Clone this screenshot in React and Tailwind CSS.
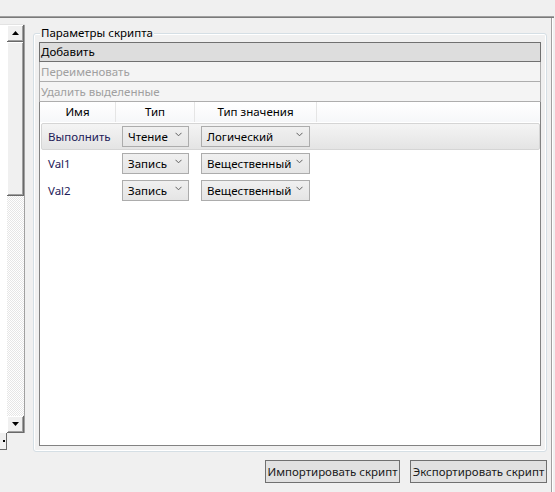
import React from 'react'

function Chevron() {
  return (
    <svg width="7" height="5" viewBox="0 0 7 5" className="shrink-0">
      <polyline points="0.5,0.8 3.5,3.8 6.5,0.8" fill="none" stroke="#606060" strokeWidth="1" />
    </svg>
  )
}

function Combo({ value, width }) {
  return (
    <div
      className={`h-[21px] ${width} flex items-center justify-between pl-[5px] pr-[6px] border border-[#acacac] bg-gradient-to-b from-[#f0f0f0] to-[#e5e5e5] text-black`}
    >
      <span className="leading-[15px] -mt-[1px] whitespace-nowrap">{value}</span>
      <span className="-mt-[5px]">
        <Chevron />
      </span>
    </div>
  )
}

function Row({ name, type, valueType, selected }) {
  return (
    <div
      className={`h-[27px] ml-[1px] flex items-center border rounded-[2px] ${
        selected
          ? 'border-[#d5d5d5] bg-gradient-to-b from-[#f4f4f4] to-[#e4e4e4]'
          : 'border-transparent'
      }`}
    >
      <div className="w-[75px] pl-[6px] text-[#1e2058]">{name}</div>
      <div className="w-[79px] pl-[5px]">
        <Combo value={type} width="w-[67px]" />
      </div>
      <div className="w-[122px] pl-[5px]">
        <Combo value={valueType} width="w-[109px]" />
      </div>
    </div>
  )
}

function ScrollButton({ up }) {
  return (
    <div className="h-[17px] shrink-0 flex items-center justify-center bg-[#f0f0f0] border-r border-b border-[#696969] shadow-[inset_1px_1px_0_#ffffff,inset_-1px_-1px_0_#a0a0a0]">
      <svg width="7" height="4" viewBox="0 0 7 4">
        {up ? <polygon points="0,4 7,4 3.5,0" fill="#000" /> : <polygon points="0,0 7,0 3.5,4" fill="#000" />}
      </svg>
    </div>
  )
}

export default function App() {
  const rows = [
    { name: 'Выполнить', type: 'Чтение', valueType: 'Логический', selected: true },
    { name: 'Val1', type: 'Запись', valueType: 'Вещественный' },
    { name: 'Val2', type: 'Запись', valueType: 'Вещественный' },
  ]

  return (
    <div className="w-[555px] h-[492px] bg-[#f0f0f0] overflow-hidden flex flex-col font-['Noto_Sans',sans-serif] text-[11.5px] text-black">
      <div className="h-[16px] shrink-0" />
      <div className="h-[2px] w-[554px] shrink-0 border-t border-[#a0a0a0] bg-[#7a7a7a]" />

      <div className="flex flex-1 min-h-0">
        {/* left list with scrollbar */}
        <div className="w-[25px] shrink-0 flex flex-col pt-[6px]">
          <div className="h-[409px] flex border-t border-[#e3e3e3]">
            <div className="w-[7px] bg-white" />
            <div className="w-[17px] flex flex-col">
              <ScrollButton up />
              <div className="h-[154px] shrink-0 bg-[#f0f0f0] border-r border-b border-[#696969] shadow-[inset_1px_1px_0_#ffffff,inset_-1px_-1px_0_#a0a0a0]" />
              <div className="flex-1 bg-[repeating-conic-gradient(#e6e6e6_0%_25%,#ffffff_0%_50%)] bg-[length:2px_2px]" />
              <ScrollButton />
            </div>
            <div className="w-[1px] bg-[#a0a0a0]" />
          </div>
          <div className="h-[17px] w-[7px] bg-[#f0f0f0] border-r border-b border-[#696969] flex items-center justify-end pr-[1px]">
            <span className="w-[2px] h-[2px] bg-black" />
          </div>
        </div>

        {/* main column */}
        <div className="ml-[8px] w-[514px] shrink-0 flex flex-col pt-[15px]">
          <div className="relative h-[419px] shrink-0 border border-[#d5dfe5] rounded-[3px] shadow-[inset_0_0_0_1px_#ffffff] px-[5px] pt-[8px] pb-[5px] flex flex-col">
            <span className="absolute -top-[9px] left-[6px] px-[1px] bg-[#f0f0f0] leading-[16px] whitespace-nowrap">
              Параметры скрипта
            </span>

            <div className="h-[20px] shrink-0 flex items-center pl-[1px] border border-[#707070] bg-[#dddddd] leading-[16px]">
              Добавить
            </div>
            <div className="h-[20px] shrink-0 flex items-center pl-[1px] border border-t-0 border-[#adadad] bg-[#f4f4f4] text-[#a0a0a0] leading-[16px]">
              Переименовать
            </div>
            <div className="h-[20px] shrink-0 flex items-center pl-[1px] border border-t-0 border-[#adadad] bg-[#f4f4f4] text-[#a0a0a0] leading-[16px]">
              Удалить выделенные
            </div>

            <div className="flex-1 border border-t-0 border-[#828282] bg-white flex flex-col">
              <div className="h-[20px] shrink-0 flex bg-gradient-to-b from-white to-[#f6f7f9]">
                <div className="w-[76px] border-r border-[#e5e5e5] text-center leading-[19px]">Имя</div>
                <div className="w-[79px] border-r border-[#e5e5e5] text-center leading-[19px]">Тип</div>
                <div className="w-[122px] border-r border-[#e5e5e5] text-center leading-[19px]">Тип значения</div>
              </div>
              <div className="pt-[1px] flex flex-col">
                {rows.map((r) => (
                  <Row key={r.name} {...r} />
                ))}
              </div>
            </div>
          </div>

          <div className="mt-[8px] flex justify-end gap-[10px]">
            <button className="h-[23px] w-[135px] border border-[#707070] bg-[#e1e1e1] text-[#1a1a1a] leading-[16px] whitespace-nowrap">
              Импортировать скрипт
            </button>
            <button className="h-[23px] w-[137px] border border-[#707070] bg-[#e1e1e1] text-[#1a1a1a] leading-[16px] whitespace-nowrap">
              Экспортировать скрипт
            </button>
          </div>
        </div>

        <div className="ml-[4px] w-[1px] bg-[#a0a0a0]" />
        <div className="w-[1px] bg-white" />
      </div>
    </div>
  )
}
